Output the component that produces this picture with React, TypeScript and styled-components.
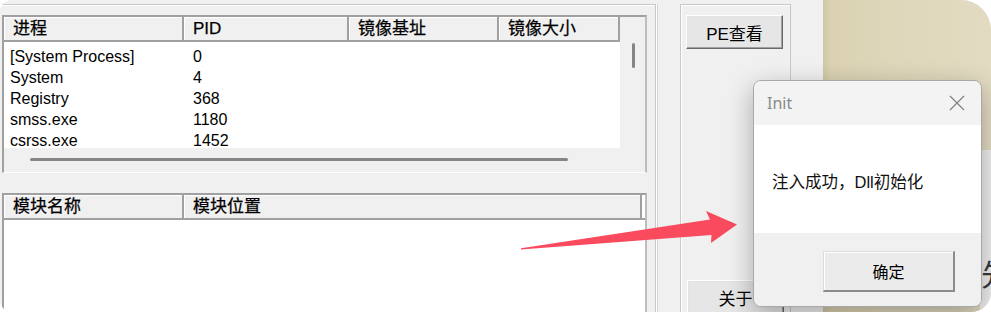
import React from "react";
import styled, { createGlobalStyle } from "styled-components";

const GlobalStyle = createGlobalStyle`
  html, body { margin: 0; padding: 0; background: #ffffff; }
  body { width: 991px; height: 312px; overflow: hidden; }
`;

const Frame = styled.div`
  position: relative;
  width: 991px;
  height: 312px;
  display: flex;
  overflow: hidden;
  border-radius: 12px 30px 20px 12px;
  background: #f0f0f0;
  font-family: "Liberation Sans", "Noto Sans CJK SC", sans-serif;
  color: #000;
`;

const AppWindow = styled.div`
  width: 823px;
  flex: none;
  display: flex;
  align-items: flex-start;
  padding-top: 4px;
  box-sizing: border-box;
  background: #f0f0f0;
`;

const LeftGroup = styled.div`
  box-sizing: border-box;
  width: 656px;
  height: 330px;
  flex: none;
  display: flex;
  flex-direction: column;
  gap: 20px;
  padding: 10px 8px 0 2px;
  border-top: 1px solid #c8c8c8;
  border-right: 1px solid #c8c8c8;
  box-shadow: inset 0 1px 0 #ffffff, 1px 0 0 #ffffff, 2px 0 0 #d2d2d2;
`;

const ListView = styled.div<{ $grow?: boolean }>`
  box-sizing: border-box;
  width: 645px;
  flex: ${(p) => (p.$grow ? "1" : "none")};
  border-top: 2px solid #a0a0a0;
  border-left: 2px solid #a0a0a0;
  border-right: 2px solid #bdbdbd;
  border-bottom: 1px solid #ffffff;
  background: #ffffff;
`;

const ScrollGrid = styled.div`
  display: grid;
  grid-template-columns: 616px 25px;
  grid-template-rows: 131px 24px;
`;

const MainArea = styled.div`
  background: #ffffff;
  overflow: hidden;
`;

const Header = styled.div`
  box-sizing: border-box;
  display: flex;
  height: 25px;
  border-bottom: 2px solid #a0a0a0;
`;

const HeaderCell = styled.div<{ $w: number }>`
  box-sizing: border-box;
  width: ${(p) => p.$w}px;
  flex: none;
  height: 23px;
  padding-left: 9px;
  border-right: 2px solid #a0a0a0;
  box-shadow: inset 1px 1px 0 #ffffff;
  background: #f0f0f0;
  font-size: 17px;
  line-height: 24px;
  white-space: nowrap;
  overflow: hidden;
  -webkit-text-stroke: 0.25px #000;
`;

const Rows = styled.div`
  height: 106px;
  padding-top: 4px;
  box-sizing: border-box;
  overflow: hidden;
`;

const Row = styled.div`
  display: grid;
  grid-template-columns: 183px 1fr;
  align-items: center;
  height: 21px;
  padding-left: 6px;
  font-size: 16px;
  line-height: 15px;
  white-space: nowrap;
`;

const VScroll = styled.div`
  background: #f0f0f0;
  padding: 26px 0 0 12px;
  box-sizing: border-box;
`;

const VThumb = styled.div`
  width: 3px;
  height: 25px;
  border-radius: 2px;
  background: #858585;
`;

const HScroll = styled.div`
  background: #f0f0f0;
  padding: 10px 0 0 26px;
  box-sizing: border-box;
`;

const HThumb = styled.div`
  width: 538px;
  height: 3px;
  border-radius: 2px;
  background: #858585;
`;

const Corner = styled.div`
  background: #f0f0f0;
`;

const RightGroup = styled.div`
  box-sizing: border-box;
  width: 111px;
  height: 330px;
  flex: none;
  margin-left: 24px;
  display: flex;
  flex-direction: column;
  align-items: flex-start;
  padding: 10px 0 0 5px;
  border: 1px solid #c8c8c8;
  box-shadow: inset 1px 1px 0 #ffffff;
`;

const WinButton = styled.div<{ $top?: number; $shift?: number }>`
  box-sizing: border-box;
  width: 97px;
  height: 34px;
  margin-top: ${(p) => p.$top ?? 0}px;
  margin-left: ${(p) => p.$shift ?? 0}px;
  display: flex;
  align-items: center;
  justify-content: center;
  background: #e6e6e6;
  border-top: 1px solid #ffffff;
  border-left: 1px solid #ffffff;
  border-right: 1px solid #696969;
  border-bottom: 1px solid #696969;
  box-shadow: inset -1px -1px 0 #a0a0a0, inset 1px 1px 0 #e3e3e3;
  font-size: 17px;
  white-space: nowrap;
`;

const Desktop = styled.div`
  flex: 1;
  background: linear-gradient(90deg, #cfc6a5 0px, #dbd2b2 8px, #ded6b9 60px, #e2dbc2 100%);
`;

const BackWindow = styled.div`
  position: absolute;
  left: 980px;
  top: 150px;
  width: 40px;
  height: 180px;
  background: #eeeeee;
  overflow: hidden;
`;

const BackGlyph = styled.span`
  position: absolute;
  left: 1px;
  top: 108px;
  font-size: 30px;
  line-height: 34px;
  color: #3a3a3a;
`;

const Dialog = styled.div`
  position: absolute;
  left: 753px;
  top: 80px;
  width: 229px;
  height: 227px;
  box-sizing: border-box;
  display: flex;
  flex-direction: column;
  border: 1px solid #a8a8a8;
  border-radius: 8px;
  overflow: hidden;
  background: #f0f0f0;
  box-shadow: 0 8px 26px rgba(0, 0, 0, 0.3);
`;

const TitleBar = styled.div`
  height: 44px;
  flex: none;
  display: flex;
  align-items: center;
  justify-content: space-between;
  padding: 0 16px 0 13px;
  background: #f3f3f3;
`;

const TitleText = styled.span`
  font-family: "Noto Sans", "Open Sans", sans-serif;
  font-size: 16px;
  color: #8a8a8a;
`;

const Content = styled.div`
  height: 108px;
  flex: none;
  display: flex;
  align-items: center;
  padding: 4px 0 0 18px;
  box-sizing: border-box;
  background: #ffffff;
  font-size: 16.5px;
  color: #111;
`;

const Footer = styled.div`
  flex: 1;
  display: flex;
  justify-content: flex-end;
  align-items: flex-start;
  padding: 18px 26px 0 0;
  background: #f0f0f0;
`;

const DialogButton = styled.div`
  box-sizing: border-box;
  width: 132px;
  height: 41px;
  display: flex;
  align-items: center;
  justify-content: center;
  background: #ebebeb;
  border-top: 1px solid #dcdcdc;
  border-left: 1px solid #dcdcdc;
  border-right: 2px solid #8c8c8c;
  border-bottom: 2px solid #8c8c8c;
  box-shadow: inset 1px 1px 0 #ffffff;
  font-size: 16px;
`;

const Overlay = styled.svg`
  position: absolute;
  left: 0;
  top: 0;
  width: 991px;
  height: 312px;
  pointer-events: none;
`;

const processes = [
  ["[System Process]", "0"],
  ["System", "4"],
  ["Registry", "368"],
  ["smss.exe", "1180"],
  ["csrss.exe", "1452"],
];

export default function App() {
  return (
    <>
      <GlobalStyle />
      <Frame>
        <AppWindow>
          <LeftGroup>
            <ListView>
              <ScrollGrid>
                <MainArea>
                  <Header>
                    <HeaderCell $w={180}>进程</HeaderCell>
                    <HeaderCell $w={165}>PID</HeaderCell>
                    <HeaderCell $w={150}>镜像基址</HeaderCell>
                    <HeaderCell $w={121}>镜像大小</HeaderCell>
                  </Header>
                  <Rows>
                    {processes.map(([name, pid]) => (
                      <Row key={name}>
                        <span>{name}</span>
                        <span>{pid}</span>
                      </Row>
                    ))}
                  </Rows>
                </MainArea>
                <VScroll>
                  <VThumb />
                </VScroll>
                <HScroll>
                  <HThumb />
                </HScroll>
                <Corner />
              </ScrollGrid>
            </ListView>
            <ListView $grow>
              <Header>
                <HeaderCell $w={180}>模块名称</HeaderCell>
                <HeaderCell $w={458}>模块位置</HeaderCell>
              </Header>
            </ListView>
          </LeftGroup>
          <RightGroup>
            <WinButton>PE查看</WinButton>
            <WinButton $top={231} $shift={1}>关于</WinButton>
          </RightGroup>
        </AppWindow>
        <Desktop />
        <BackWindow>
          <BackGlyph>先</BackGlyph>
        </BackWindow>
        <Overlay viewBox="0 0 991 312">
          <polygon
            points="521,248.3 710,219.5 706,211 737,224.5 711,243 711.5,235 521,249.6"
            fill="#fa4a5e"
          />
        </Overlay>
        <Dialog>
          <TitleBar>
            <TitleText>Init</TitleText>
            <svg width="16" height="16" viewBox="0 0 16 16">
              <path d="M1 1 L15 15 M15 1 L1 15" stroke="#7c7c7c" strokeWidth="1.1" fill="none" />
            </svg>
          </TitleBar>
          <Content>注入成功，Dll初始化</Content>
          <Footer>
            <DialogButton>确定</DialogButton>
          </Footer>
        </Dialog>
      </Frame>
    </>
  );
}
